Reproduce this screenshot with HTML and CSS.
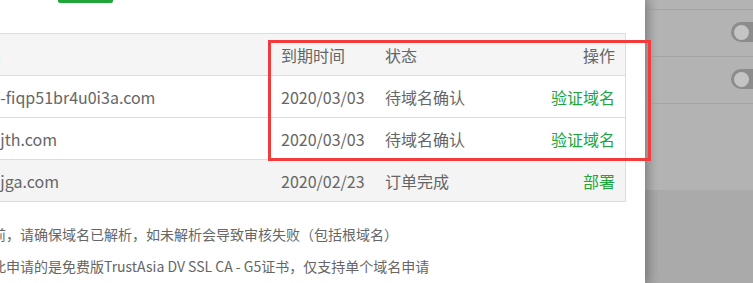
FILE: index.html
```html
<html lang="zh-CN">
  <head>
    <meta charset="UTF-8" />
    <meta name="viewport" content="width=device-width, initial-scale=1.0" />
    <title>SSL 证书列表</title>
    <link rel="stylesheet" href="styles.css">
  </head>
  <body>
    <div class="screen">
      <div class="panel">
        <div class="inner">
          <a class="btn-apply" href="javascript:;"></a>
          <table class="cert-table">
            <thead>
              <tr>
                <th class="col-domain">域名</th>
                <th class="col-date">到期时间</th>
                <th class="col-state">状态</th>
                <th class="col-op">操作</th>
              </tr>
            </thead>
            <tbody>
              <tr>
                <td class="col-domain">xn--fiqp51br4u0i3a.com</td>
                <td>2020/03/03</td>
                <td>待域名确认</td>
                <td class="col-op"><a href="javascript:;">验证域名</a></td>
              </tr>
              <tr>
                <td class="col-domain">oa.jth.com</td>
                <td>2020/03/03</td>
                <td>待域名确认</td>
                <td class="col-op"><a href="javascript:;">验证域名</a></td>
              </tr>
              <tr class="done">
                <td class="col-domain">oa.jga.com</td>
                <td>2020/02/23</td>
                <td>订单完成</td>
                <td class="col-op"><a href="javascript:;">部署</a></td>
              </tr>
            </tbody>
          </table>
          <!-- tips -->
          <ul class="tips">
            <li>前，请确保域名已解析，如未解析会导致审核失败（包括根域名）</li>
            <li>此申请的是免费版TrustAsia DV SSL CA - G5证书，仅支持单个域名申请</li>
          </ul>
        </div>
      </div>
      <div class="backdrop">
        <div class="bg-row first"></div>
        <div class="bg-row"><span class="switch"></span></div>
        <div class="bg-row"><span class="switch"></span></div>
        <div class="bg-rest"></div>
        <div class="bg-low"></div>
      </div>
      <div class="mark"></div>
    </div>
  </body>
</html>
```

FILE: styles.css
```css
* {
  margin: 0;
  padding: 0;
  box-sizing: border-box;
}
body {
  width: 753px;
  height: 283px;
  overflow: hidden;
  font-family: "Noto Sans CJK SC", "Liberation Sans", sans-serif;
  font-size: 14px;
  color: #666;
}
ul {
  list-style: none;
}
a {
  text-decoration: none;
  color: #20a53a;
}
.screen {
  display: flex;
  height: 283px;
  position: relative;
}
.panel {
  width: 645px;
  flex: none;
  background-color: #fff;
  overflow: hidden;
  box-shadow: 2px 0 10px rgba(0, 0, 0, 0.25);
  z-index: 1;
}
.inner {
  margin-left: -30px;
  width: 656px;
}
.btn-apply {
  display: block;
  width: 55px;
  height: 3px;
  margin-left: 88px;
  background-color: #20a53a;
  border-radius: 0 0 2px 2px;
}

/* table */
.cert-table {
  margin-top: 30px;
  width: 656px;
  border-collapse: collapse;
  table-layout: fixed;
  border-top: 1px solid #ddd;
  border-right: 1px solid #ddd;
}
.cert-table th,
.cert-table td {
  height: 42px;
  padding: 0 10px;
  text-align: left;
  font-weight: normal;
  border-bottom: 1px solid #ddd;
  white-space: nowrap;
  overflow: hidden;
}
.cert-table thead tr {
  background-color: #f5f5f5;
}
.cert-table .col-domain {
  width: 301px;
  padding-left: 0;
}
.cert-table td.col-domain {
  padding-left: 7px;
}
.cert-table .col-date {
  width: 104px;
}
.cert-table .col-state {
  width: 130px;
}
.cert-table .col-op {
  text-align: right;
}
.cert-table tr.done {
  background-color: #f4f4f4;
}

/* tips */
.tips {
  margin-top: 16px;
  margin-left: 22px;
  line-height: 32px;
}

/* annotation box */
.mark {
  position: absolute;
  left: 268px;
  top: 40px;
  width: 383px;
  height: 121px;
  border: 3px solid #f43b3b;
  z-index: 2;
}

/* dimmed page behind */
.backdrop {
  flex: 1;
  display: flex;
  flex-direction: column;
  background: linear-gradient(to right, #a6a6a6, #b3b3b3 12px);
}
.bg-row {
  height: 47px;
  border-bottom: 1px solid #a4a4a4;
  display: flex;
  align-items: center;
  justify-content: flex-end;
  padding-bottom: 2px;
}
.bg-row.first {
  height: 10px;
  padding: 0;
}
.bg-rest {
  height: 86px;
}
.bg-low {
  flex: 1;
  background: linear-gradient(to right, #9c9c9c, #aaaaaa 14px);
}
.switch {
  width: 24px;
  height: 20px;
  margin-right: -2px;
  border-radius: 10px 0 0 10px;
  background-color: #8c8c8c;
  display: flex;
  align-items: center;
  padding-left: 3px;
}
.switch::before {
  content: "";
  width: 15px;
  height: 15px;
  border-radius: 50%;
  background-color: #c4c4c4;
}
```
